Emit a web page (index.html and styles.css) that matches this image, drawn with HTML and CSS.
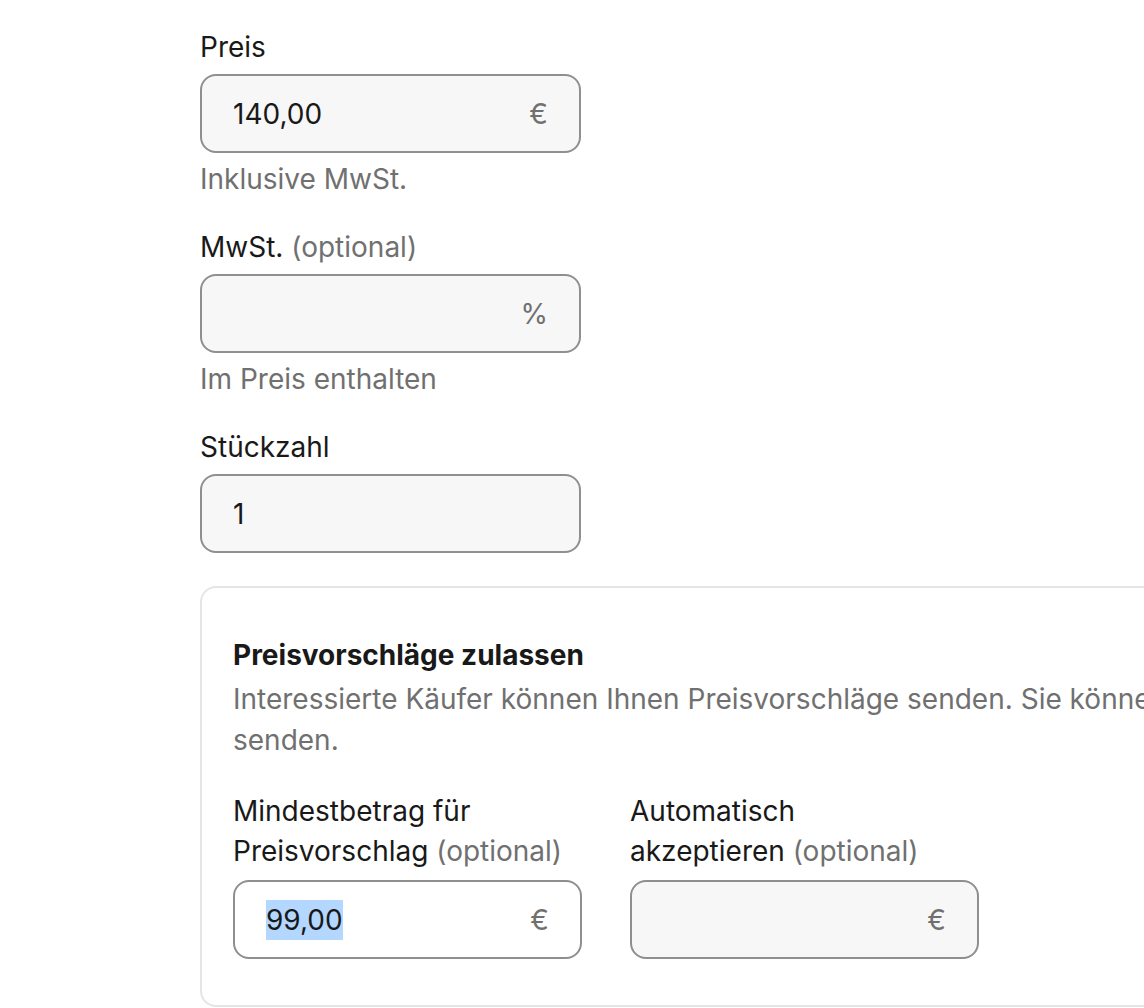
FILE: index.html
```html
<!DOCTYPE html>
<html lang="de">
<head>
<meta charset="utf-8">
<title>Preis</title>
<link rel="stylesheet" href="styles.css">
</head>
<body>
<main class="page">
  <div class="field">
    <label class="label">Preis</label>
    <div class="input">
      <span class="value">140,00</span>
      <span class="suffix">€</span>
    </div>
    <p class="helper">Inklusive MwSt.</p>
  </div>

  <div class="field">
    <label class="label">MwSt. <span class="optional">(optional)</span></label>
    <div class="input">
      <span class="value"></span>
      <span class="suffix">%</span>
    </div>
    <p class="helper">Im Preis enthalten</p>
  </div>

  <div class="field">
    <label class="label">Stückzahl</label>
    <div class="input">
      <span class="value">1</span>
    </div>
  </div>

  <section class="card">
    <h2 class="card-title">Preisvorschläge zulassen</h2>
    <p class="card-desc">Interessierte Käufer können Ihnen Preisvorschläge senden. Sie können auch ein Gegenangebot senden.</p>
    <div class="offer-row">
      <div class="offer-field">
        <label class="label">Mindestbetrag für Preisvorschlag <span class="optional">(optional)</span></label>
        <div class="input input-white">
          <span class="value"><span class="selected">99,00</span></span>
          <span class="suffix">€</span>
        </div>
      </div>
      <div class="offer-field">
        <label class="label">Automatisch<br>akzeptieren <span class="optional">(optional)</span></label>
        <div class="input">
          <span class="value"></span>
          <span class="suffix">€</span>
        </div>
      </div>
    </div>
  </section>
</main>
</body>
</html>
```

FILE: styles.css
```css
html, body {
  margin: 0;
  padding: 0;
  overflow: hidden;
  background: #ffffff;
}

body {
  font-family: Inter, "Open Sans", "Liberation Sans", sans-serif;
  font-size: 28px;
  line-height: 40px;
  color: #191919;
}

.page {
  display: flex;
  flex-direction: column;
  align-items: flex-start;
  gap: 28px;
  padding: 27px 0 0 200px;
}

.field {
  display: flex;
  flex-direction: column;
  width: 381px;
}

.label {
  display: block;
  margin-bottom: 7px;
}

.optional {
  color: #707070;
}

.input {
  box-sizing: border-box;
  height: 79px;
  flex: none;
  display: flex;
  align-items: center;
  justify-content: space-between;
  padding: 0 31px;
  background: #f7f7f7;
  border: 2px solid #8f8f8f;
  border-radius: 16px;
}

.input-white {
  background: #ffffff;
}

.value {
  color: #191919;
}

.selected {
  background: #b4d7ff;
  padding: 3px 0;
}

.suffix {
  color: #707070;
}

.helper {
  margin: 6px 0 0;
  color: #707070;
}

.card {
  box-sizing: border-box;
  width: 1400px;
  margin-top: 5px;
  padding: 47px 31px 46px;
  border: 2px solid #e5e5e5;
  border-radius: 16px;
}

.card-title {
  margin: 0;
  font-size: 28px;
  line-height: 40px;
  font-weight: 700;
}

.card-desc {
  margin: 4px 0 0;
  width: 1270px;
  line-height: 41px;
  color: #707070;
}

.offer-row {
  display: flex;
  gap: 48px;
  margin-top: 30px;
}

.offer-field {
  width: 349px;
  display: flex;
  flex-direction: column;
}

.offer-field .label {
  margin-bottom: 9px;
}
```
